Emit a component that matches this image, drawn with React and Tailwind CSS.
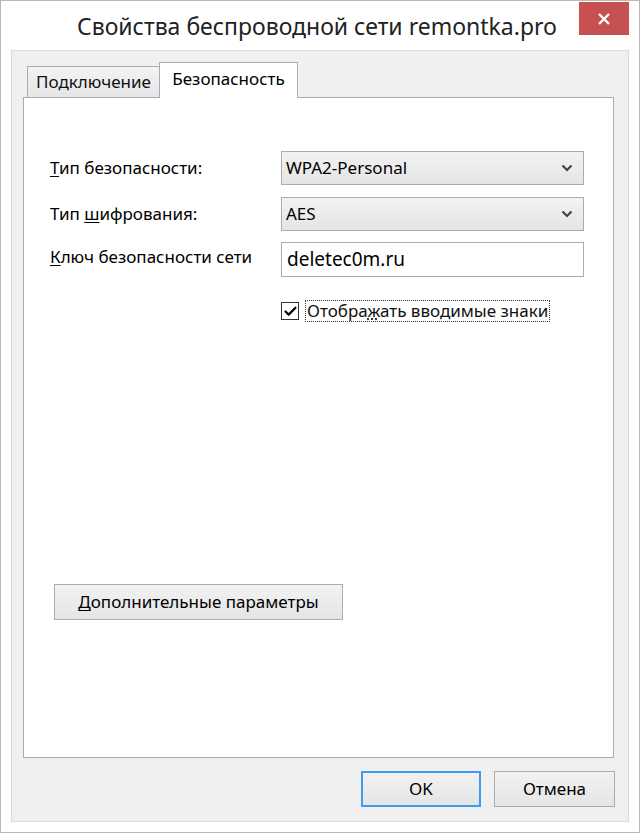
import { Check } from "lucide-react";

const font = { fontFamily: '"Noto Sans", "Open Sans", sans-serif' };

function Chevron() {
  return (
    <svg width="12" height="8" viewBox="0 0 12 8" className="text-[#444]">
      <path d="M1.5 1.5 L6 6 L10.5 1.5" fill="none" stroke="currentColor" strokeWidth="2.2" />
    </svg>
  );
}

function Select({ value }) {
  return (
    <div className="flex h-[34px] w-[303px] items-center justify-between border border-[#acacac] bg-gradient-to-b from-[#f2f2f2] to-[#e5e5e5] pl-[4px] pr-[10px] text-[17px] text-black">
      <span>{value}</span>
      <Chevron />
    </div>
  );
}

export default function App() {
  return (
    <div
      className="flex h-[833px] w-[640px] flex-col border border-[#b9b9b9] bg-white text-black"
      style={font}
    >
      {/* title bar */}
      <div className="relative flex h-[49px] items-center justify-center">
        <span className="mr-[6px] pt-[2px] text-[23px] text-[#222]">
          Свойства беспроводной сети remontka.pro
        </span>
        <div className="absolute right-[10px] top-[1px] flex h-[33px] w-[50px] items-center justify-center bg-[#c75050] text-white">
          <svg width="14" height="14" viewBox="0 0 14 14">
            <path d="M2 2 L12 12 M12 2 L2 12" stroke="white" strokeWidth="2.4" />
          </svg>
        </div>
      </div>

      {/* client area */}
      <div className="mx-[10px] mb-[10px] flex flex-1 flex-col border border-[#dadada] bg-[#f0f0f0] pl-[11px] pr-[14px] pt-[11px]">
        {/* tabs */}
        <div className="flex items-end pl-[4px] text-[17px]">
          <div className="-mr-px flex h-[31px] w-[133px] items-center justify-center border border-b-0 border-[#acacac] bg-gradient-to-b from-[#f3f3f3] to-[#e6e6e6] text-[#111]">
            Подключение
          </div>
          <div className="relative z-10 -mb-px flex h-[36px] w-[139px] items-center justify-center border border-b-0 border-[#acacac] bg-white pb-[4px]">
            Безопасность
          </div>
        </div>

        {/* panel */}
        <div className="flex flex-1 flex-col border border-[#acacac] bg-white pl-[26px] pr-[29px] pt-[53px] text-[17px]">
          <div className="flex items-center">
            <div className="w-[231px]">
              <span className="underline underline-offset-2">Т</span>ип безопасности:
            </div>
            <Select value="WPA2-Personal" />
          </div>
          <div className="mt-[12px] flex items-center">
            <div className="w-[231px]">
              Тип <span className="underline underline-offset-2">ш</span>ифрования:
            </div>
            <Select value="AES" />
          </div>
          <div className="mt-[11px] flex items-center">
            <div className="w-[231px] pb-[6px]">
              <span className="underline underline-offset-2">К</span>люч безопасности сети
            </div>
            <div className="flex h-[35px] w-[303px] items-center border border-[#acacac] bg-white pl-[5px] text-[19px]">
              deletec0m.ru
            </div>
          </div>
          <div className="mt-[23px] flex items-center pl-[231px]">
            <div className="flex h-[18px] w-[18px] items-center justify-center border border-[#333] bg-white">
              <Check size={15} strokeWidth={3.5} className="text-black" />
            </div>
            <div className="ml-[6px] border border-dotted border-[#333] px-px leading-[20px] text-[#111]">
              Отобра<span className="underline decoration-dotted underline-offset-2">ж</span>ать вводимые знаки
            </div>
          </div>

          <div className="mt-[262px] pl-[4px]">
            <div className="flex h-[36px] w-[289px] items-center justify-center border border-[#acacac] bg-gradient-to-b from-[#f2f2f2] to-[#e5e5e5]">
              <span>
                <span className="underline underline-offset-2">Д</span>ополнительные параметры
              </span>
            </div>
          </div>
        </div>

        {/* bottom buttons */}
        <div className="flex h-[63px] items-center justify-end gap-[13px] pb-[2px] text-[17px]">
          <div className="flex h-[36px] w-[120px] items-center justify-center border-2 border-[#3c9cf0] bg-gradient-to-b from-[#f2f2f2] to-[#e5e5e5]">
            OK
          </div>
          <div className="-mr-[1px] flex h-[36px] w-[121px] items-center justify-center border border-[#acacac] bg-gradient-to-b from-[#f2f2f2] to-[#e5e5e5]">
            Отмена
          </div>
        </div>
      </div>
    </div>
  );
}
